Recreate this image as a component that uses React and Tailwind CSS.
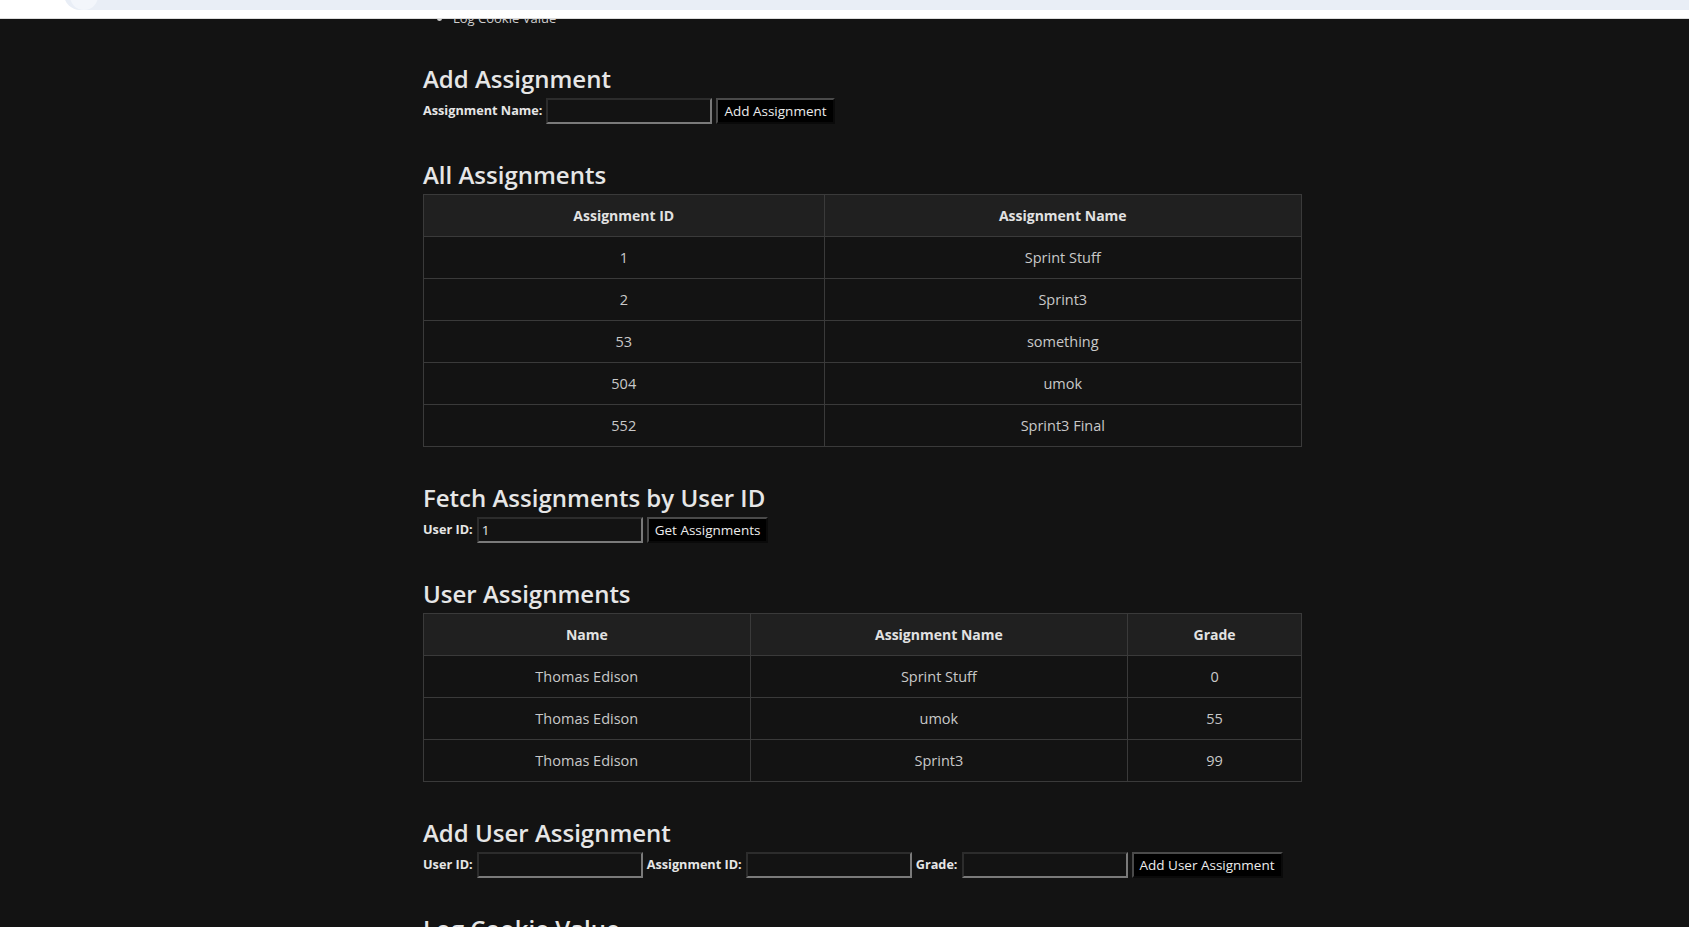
import React from "react";

const font = { fontFamily: '"Open Sans", "Noto Sans", sans-serif' };

function Heading({ children }) {
  return (
    <h2 className="text-[24px] leading-[24px] font-semibold text-[#e6e6e6] mt-[39px] mb-[7px]">
      {children}
    </h2>
  );
}

function Input({ value = "", w = "w-[166px]" }) {
  return (
    <input
      readOnly
      value={value}
      className={`${w} h-[26px] bg-[#131313] text-[#e6e6e6] text-[13.5px] px-[3px] border-2 border-t-[#2c2c2c] border-l-[#2c2c2c] border-b-[#7a7a7a] border-r-[#7a7a7a] outline-none`}
    />
  );
}

function Button({ children }) {
  return (
    <button className="h-[26px] px-[6px] bg-black text-[#ececec] text-[13.5px] border-2 border-t-[#4a4a4a] border-l-[#4a4a4a] border-b-[#0a0a0a] border-r-[#0a0a0a]">
      {children}
    </button>
  );
}

function Label({ children }) {
  return <span className="text-[12.7px] font-bold text-[#e6e6e6]">{children}</span>;
}

function Table({ cols, widths, rows }) {
  return (
    <table className="w-[879px] border-collapse">
      <thead>
        <tr>
          {cols.map((c, i) => (
            <th
              key={c}
              className={`${widths[i]} h-[42px] bg-[#202020] border border-[#3a3a3a] text-[14px] font-bold text-[#e2e2e2]`}
            >
              {c}
            </th>
          ))}
        </tr>
      </thead>
      <tbody>
        {rows.map((r, ri) => (
          <tr key={ri}>
            {r.map((c, ci) => (
              <td
                key={ci}
                className="h-[42px] border border-[#3a3a3a] text-center text-[14.5px] text-[#c9c9c9]"
              >
                {c}
              </td>
            ))}
          </tr>
        ))}
      </tbody>
    </table>
  );
}

export default function App() {
  return (
    <div className="w-[1689px] h-[927px] overflow-hidden flex flex-col bg-[#131313]" style={font}>
      <div className="h-[19px] shrink-0 bg-white border-b border-[#dcdcdc] relative overflow-hidden">
        <div className="absolute left-[64px] right-0 top-[-22px] h-[32px] rounded-l-[16px] bg-[#e9eef6]">
          <div className="absolute left-[6px] top-[4px] w-[28px] h-[28px] rounded-full bg-[#f3f6fb]" />
        </div>
      </div>
      <div className="flex-1 overflow-hidden">
        <div className="-mt-[11px] ml-[423px] w-[879px]">
          <ul className="list-disc pl-[30px] text-[13px] leading-[20px] text-[#cfcfcf]">
            <li>Log Cookie Value</li>
          </ul>

          <Heading>Add Assignment</Heading>
          <div className="flex items-center gap-[4px]">
            <Label>Assignment Name:</Label>
            <Input />
            <Button>Add Assignment</Button>
          </div>

          <Heading>All Assignments</Heading>
          <Table
            cols={["Assignment ID", "Assignment Name"]}
            widths={["w-[401px]", "w-[478px]"]}
            rows={[
              ["1", "Sprint Stuff"],
              ["2", "Sprint3"],
              ["53", "something"],
              ["504", "umok"],
              ["552", "Sprint3 Final"],
            ]}
          />

          <Heading>Fetch Assignments by User ID</Heading>
          <div className="flex items-center gap-[4px]">
            <Label>User ID:</Label>
            <Input value="1" />
            <Button>Get Assignments</Button>
          </div>

          <Heading>User Assignments</Heading>
          <Table
            cols={["Name", "Assignment Name", "Grade"]}
            widths={["w-[327px]", "w-[378px]", "w-[174px]"]}
            rows={[
              ["Thomas Edison", "Sprint Stuff", "0"],
              ["Thomas Edison", "umok", "55"],
              ["Thomas Edison", "Sprint3", "99"],
            ]}
          />

          <Heading>Add User Assignment</Heading>
          <div className="flex items-center gap-[4px]">
            <Label>User ID:</Label>
            <Input />
            <Label>Assignment ID:</Label>
            <Input />
            <Label>Grade:</Label>
            <Input />
            <Button>Add User Assignment</Button>
          </div>

          <Heading>Log Cookie Value</Heading>
        </div>
      </div>
    </div>
  );
}
